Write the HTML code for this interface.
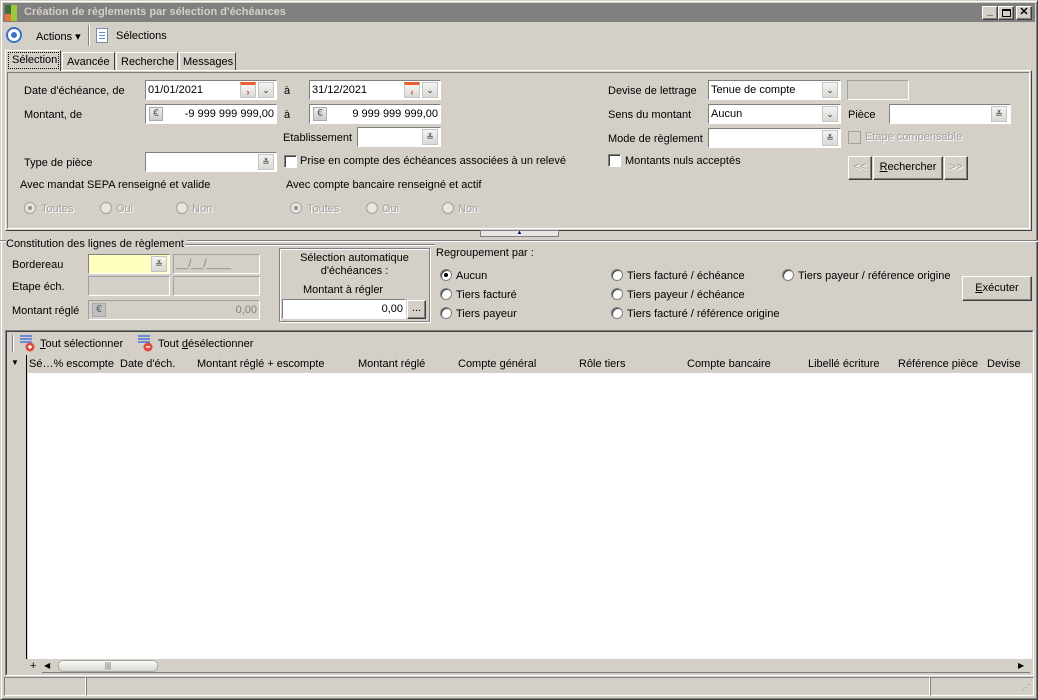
<!DOCTYPE html>
<html><head><meta charset="utf-8">
<style>
*{box-sizing:border-box;margin:0;padding:0}
body{width:1038px;height:700px;background:#d4d0c8;font-family:"Liberation Sans",sans-serif;font-size:11px;color:#000;position:relative;overflow:hidden}
.a{position:absolute;white-space:nowrap}
.in{position:absolute;background:#fff;border-top:1px solid #808080;border-left:1px solid #808080;border-bottom:1px solid #fff;border-right:1px solid #fff;height:20px;padding:1px 2px;line-height:16px}
.dis{background:#d4d0c8;border-top:1px solid #a0a0a0;border-left:1px solid #a0a0a0;border-bottom:1px solid #fff;border-right:1px solid #fff}
.btn{position:absolute;width:16px;height:16px;background:linear-gradient(#f4f4f2,#d8d8d4);border:1px solid #c4c4c0;font-size:9px;line-height:14px;text-align:center;color:#333}
.rb{position:absolute;width:12px;height:12px;border-radius:50%;background:#fff;border:1px solid #808080;box-shadow:inset 1px 1px 0 #404040}
.rb.d{background:#e8e6e0;box-shadow:none;border-color:#a0a0a0}
.rb.on:after{content:"";position:absolute;left:3px;top:3px;width:4px;height:4px;border-radius:50%;background:#000}
.rb.d.on:after{background:#909090}
.cb{position:absolute;width:13px;height:13px;background:#fff;border-top:1px solid #808080;border-left:1px solid #808080;border-bottom:1px solid #fff;border-right:1px solid #fff;box-shadow:inset 1px 1px 0 #404040}
.g{color:#a0a0a0;text-shadow:1px 1px 0 #fff}
.pb{position:absolute;background:#d4d0c8;border-top:1px solid #fff;border-left:1px solid #fff;border-right:1px solid #404040;border-bottom:1px solid #404040;box-shadow:inset -1px -1px 0 #808080;text-align:center}
.eu{position:absolute;width:14px;height:14px;background:linear-gradient(#eee,#ccc);border:1px solid #aaa;font-size:10px;line-height:12px;text-align:center;color:#555}
</style></head><body>
<div class="a" style="left:0;top:0;width:1038px;height:700px;border-top:1px solid #d4d0c8;border-left:1px solid #d4d0c8;border-right:1px solid #404040;border-bottom:1px solid #404040;box-shadow:inset 1px 1px 0 #fff,inset -1px -1px 0 #808080"></div>
<div class="a" style="left:3px;top:3px;width:1032px;height:19px;background:#808080"></div>
<div class="a" style="left:5px;top:5px;width:6px;height:16px;background:#3c6e3c"></div>
<div class="a" style="left:5px;top:14px;width:6px;height:7px;background:#e8743c"></div>
<div class="a" style="left:11px;top:5px;width:6px;height:16px;background:#9cc93c"></div>
<div class="a" style="left:24px;top:6px;color:#d4d0c8;font-weight:bold;font-size:11px">Création de règlements par sélection d'échéances</div>
<div class="pb" style="left:982px;top:6px;width:16px;height:14px;font-size:10px;line-height:10px;font-weight:bold">_</div>
<div class="pb" style="left:998px;top:6px;width:16px;height:14px"><div style="margin:2px auto;width:9px;height:8px;border:1px solid #000;border-top-width:2px"></div></div>
<div class="pb" style="left:1016px;top:6px;width:16px;height:14px;font-size:11px;line-height:11px;font-weight:bold">✕</div>
<div class="a" style="left:6px;top:27px;width:16px;height:16px;border-radius:50%;border:2px solid #3a72c8;background:#fff"><div style="margin:3px;width:6px;height:6px;border-radius:50%;background:#3a72c8"></div></div>
<div class="a" style="left:36px;top:30px">Actions ▾</div>
<div class="a" style="left:88px;top:25px;width:2px;height:21px;border-left:1px solid #808080;border-right:1px solid #fff"></div>
<div class="a" style="left:96px;top:28px;width:12px;height:15px;background:#fff;border:1px solid #7a8aa8"><div style="margin:3px 2px;height:1px;background:#6a8ad8;box-shadow:0 3px 0 #6a8ad8,0 6px 0 #6a8ad8"></div></div>
<div class="a" style="left:116px;top:30px">Sélections</div>
<div class="a" style="left:5px;top:50px;width:56px;height:21px;background:#d4d0c8;border-top:1px solid #fff;border-left:1px solid #fff;border-right:1px solid #404040;z-index:2"></div>
<div class="a" style="left:8px;top:52px;width:51px;height:17px;border:1px dotted #000;z-index:3;padding-left:3px;line-height:14px">Sélection</div>
<div class="a" style="left:62px;top:52px;width:53px;height:18px;border-top:1px solid #fff;border-left:1px solid #fff;border-right:1px solid #404040;padding:3px 0 0 4px">Avancée</div>
<div class="a" style="left:116px;top:52px;width:62px;height:18px;border-top:1px solid #fff;border-left:1px solid #fff;border-right:1px solid #404040;padding:3px 0 0 4px">Recherche</div>
<div class="a" style="left:179px;top:52px;width:57px;height:18px;border-top:1px solid #fff;border-left:1px solid #fff;border-right:1px solid #404040;padding:3px 0 0 3px">Messages</div>
<div class="a" style="left:5px;top:70px;width:1027px;height:161px;border-top:1px solid #fff;border-left:1px solid #fff;border-right:1px solid #404040;border-bottom:1px solid #404040"></div>
<div class="a" style="left:7px;top:72px;width:1023px;height:157px;border-top:1px solid #808080;border-left:1px solid #808080;border-right:1px solid #fff;border-bottom:1px solid #fff"></div>

<div class="a" style="left:24px;top:85px">Date d'échéance, de</div>
<div class="in" style="left:145px;top:80px;width:132px">01/01/2021</div>
<div class="btn" style="left:240px;top:82px;color:#d04020;font-weight:bold;border-top:3px solid #e86030">›</div>
<div class="btn" style="left:258px;top:82px">⌄</div>
<div class="a" style="left:284px;top:85px">à</div>
<div class="in" style="left:309px;top:80px;width:132px">31/12/2021</div>
<div class="btn" style="left:404px;top:82px;color:#d04020;font-weight:bold;border-top:3px solid #e86030">‹</div>
<div class="btn" style="left:422px;top:82px">⌄</div>

<div class="a" style="left:24px;top:109px">Montant, de</div>
<div class="in" style="left:145px;top:104px;width:132px;text-align:right">-9 999 999 999,00</div>
<div class="eu" style="left:149px;top:107px">€</div>
<div class="a" style="left:284px;top:109px">à</div>
<div class="in" style="left:309px;top:104px;width:132px;text-align:right">9 999 999 999,00</div>
<div class="eu" style="left:313px;top:107px">€</div>

<div class="a" style="left:283px;top:132px">Etablissement</div>
<div class="in" style="left:357px;top:127px;width:84px"></div>
<div class="btn" style="left:422px;top:129px">≚</div>

<div class="a" style="left:24px;top:157px">Type de pièce</div>
<div class="in" style="left:145px;top:152px;width:132px"></div>
<div class="btn" style="left:258px;top:154px">≚</div>
<div class="cb" style="left:284px;top:155px"></div>
<div class="a" style="left:300px;top:155px">Prise en compte des échéances associées à un relevé</div>

<div class="a" style="left:20px;top:179px">Avec mandat SEPA renseigné et valide</div>
<div class="a" style="left:286px;top:179px">Avec compte bancaire renseigné et actif</div>
<div class="rb d on" style="left:24px;top:202px"></div><div class="a g" style="left:41px;top:203px">Toutes</div>
<div class="rb d" style="left:100px;top:202px"></div><div class="a g" style="left:116px;top:203px">Oui</div>
<div class="rb d" style="left:176px;top:202px"></div><div class="a g" style="left:192px;top:203px">Non</div>
<div class="rb d on" style="left:290px;top:202px"></div><div class="a g" style="left:307px;top:203px">Toutes</div>
<div class="rb d" style="left:366px;top:202px"></div><div class="a g" style="left:382px;top:203px">Oui</div>
<div class="rb d" style="left:442px;top:202px"></div><div class="a g" style="left:458px;top:203px">Non</div>

<div class="a" style="left:608px;top:85px">Devise de lettrage</div>
<div class="in" style="left:708px;top:80px;width:133px">Tenue de compte</div>
<div class="btn" style="left:822px;top:82px">⌄</div>
<div class="in dis" style="left:847px;top:80px;width:62px"></div>
<div class="a" style="left:608px;top:109px">Sens du montant</div>
<div class="in" style="left:708px;top:104px;width:133px">Aucun</div>
<div class="btn" style="left:822px;top:106px">⌄</div>
<div class="a" style="left:848px;top:109px">Pièce</div>
<div class="in" style="left:889px;top:104px;width:122px"></div>
<div class="btn" style="left:991px;top:106px">≚</div>
<div class="a" style="left:608px;top:133px">Mode de règlement</div>
<div class="in" style="left:708px;top:128px;width:133px"></div>
<div class="btn" style="left:822px;top:130px">≚</div>
<div class="cb" style="left:848px;top:131px;background:#d4d0c8;box-shadow:none;border-color:#a0a0a0"></div>
<div class="a g" style="left:865px;top:131px">Etape compensable</div>
<div class="cb" style="left:608px;top:154px"></div>
<div class="a" style="left:625px;top:155px">Montants nuls acceptés</div>
<div class="pb g" style="left:848px;top:156px;width:24px;height:24px;line-height:21px">&lt;&lt;</div>
<div class="pb" style="left:873px;top:156px;width:70px;height:24px;line-height:21px"><u>R</u>echercher</div>
<div class="pb g" style="left:944px;top:156px;width:24px;height:24px;line-height:21px">&gt;&gt;</div>

<div class="a" style="left:480px;top:230px;width:79px;height:7px;border:1px solid #808080;background:#e8e6e0;font-size:6px;line-height:5px;text-align:center;color:#000080">▲</div>
<div class="a" style="left:0;top:240px;width:1038px;height:2px;border-top:1px solid #808080;border-bottom:1px solid #fff"></div>

<div class="a" style="left:6px;top:238px;background:#d4d0c8;padding-right:3px">Constitution des lignes de règlement</div>
<div class="a" style="left:185px;top:244px;width:250px;height:2px;border-top:1px solid #808080;border-bottom:1px solid #fff"></div>
<div class="a" style="left:12px;top:259px">Bordereau</div>
<div class="in" style="left:88px;top:254px;width:82px;background:#ffffc0"></div>
<div class="btn" style="left:151px;top:256px">≚</div>
<div class="in dis" style="left:173px;top:254px;width:87px;color:#808080">__/__/____</div>
<div class="a" style="left:12px;top:281px">Etape éch.</div>
<div class="in dis" style="left:88px;top:276px;width:82px"></div>
<div class="in dis" style="left:173px;top:276px;width:87px"></div>
<div class="a" style="left:12px;top:305px">Montant réglé</div>
<div class="in dis" style="left:88px;top:300px;width:172px;text-align:right;color:#808080">0,00</div>
<div class="eu" style="left:92px;top:303px;background:#c0c0c0">€</div>

<div class="a" style="left:279px;top:248px;width:151px;height:74px;border:1px solid #808080;box-shadow:1px 1px 0 #fff,inset 1px 1px 0 #fff"></div>
<div class="a" style="left:279px;top:252px;width:151px;text-align:center;line-height:13px;white-space:normal">Sélection automatique<br>d'échéances :</div>
<div class="a" style="left:303px;top:284px">Montant à régler</div>
<div class="in" style="left:282px;top:299px;width:124px;text-align:right">0,00</div>
<div class="pb" style="left:407px;top:300px;width:19px;height:19px;line-height:14px">...</div>

<div class="a" style="left:436px;top:247px">Regroupement par :</div>
<div class="rb on" style="left:440px;top:269px"></div><div class="a" style="left:456px;top:270px">Aucun</div>
<div class="rb" style="left:440px;top:288px"></div><div class="a" style="left:456px;top:289px">Tiers facturé</div>
<div class="rb" style="left:440px;top:307px"></div><div class="a" style="left:456px;top:308px">Tiers payeur</div>
<div class="rb" style="left:611px;top:269px"></div><div class="a" style="left:627px;top:270px">Tiers facturé / échéance</div>
<div class="rb" style="left:611px;top:288px"></div><div class="a" style="left:627px;top:289px">Tiers payeur / échéance</div>
<div class="rb" style="left:611px;top:307px"></div><div class="a" style="left:627px;top:308px">Tiers facturé / référence origine</div>
<div class="rb" style="left:782px;top:269px"></div><div class="a" style="left:798px;top:270px">Tiers payeur / référence origine</div>
<div class="pb" style="left:962px;top:276px;width:70px;height:25px;line-height:22px"><u>E</u>xécuter</div>

<div class="a" style="left:5px;top:330px;width:1029px;height:346px;border-top:1px solid #808080;border-left:1px solid #808080;border-right:1px solid #fff;border-bottom:1px solid #fff"></div>
<div class="a" style="left:6px;top:331px;width:1027px;height:344px;border-top:1px solid #404040;border-left:1px solid #404040;border-right:1px solid #d4d0c8;border-bottom:1px solid #d4d0c8"></div>
<div class="a" style="left:12px;top:335px;width:2px;height:17px;border-left:1px solid #808080;border-right:1px solid #fff"></div>
<svg class="a" style="left:20px;top:334px" width="16" height="18"><rect x="0" y="1" width="12" height="2" fill="#6a8ad8"/><rect x="0" y="4" width="12" height="2" fill="#6a8ad8"/><rect x="0" y="7" width="12" height="2" fill="#6a8ad8"/><circle cx="10" cy="13" r="4.5" fill="#e04a3a"/><path d="M8 13h4M10 11v4" stroke="#fff" stroke-width="1.5"/></svg>
<div class="a" style="left:40px;top:338px"><u>T</u>out sélectionner</div>
<svg class="a" style="left:138px;top:334px" width="16" height="18"><rect x="0" y="1" width="12" height="2" fill="#6a8ad8"/><rect x="0" y="4" width="12" height="2" fill="#6a8ad8"/><rect x="0" y="7" width="12" height="2" fill="#6a8ad8"/><circle cx="10" cy="13" r="4.5" fill="#e04a3a"/><path d="M8 13h4" stroke="#fff" stroke-width="1.5"/></svg>
<div class="a" style="left:158px;top:338px">Tout <u>d</u>ésélectionner</div>
<div class="a" style="left:7px;top:355px;width:1024px;height:18px;background:#d4d0c8"></div>
<div class="a" style="left:28px;top:373px;width:1004px;height:286px;background:#fff"></div>
<div class="a" style="left:26px;top:355px;width:1px;height:304px;background:#000"></div>
<div class="a" style="left:11px;top:358px;font-size:8px">▼</div>
<div class="a" style="left:29px;top:358px">Sé…% escompte</div>
<div class="a" style="left:120px;top:358px">Date d'éch.</div>
<div class="a" style="left:197px;top:358px">Montant réglé + escompte</div>
<div class="a" style="left:358px;top:358px">Montant réglé</div>
<div class="a" style="left:458px;top:358px">Compte général</div>
<div class="a" style="left:579px;top:358px">Rôle tiers</div>
<div class="a" style="left:687px;top:358px">Compte bancaire</div>
<div class="a" style="left:808px;top:358px">Libellé écriture</div>
<div class="a" style="left:898px;top:358px">Référence pièce</div>
<div class="a" style="left:987px;top:358px">Devise</div>
<div class="a" style="left:30px;top:661px;font-size:11px;line-height:10px">+</div>
<div class="a" style="left:42px;top:659px;width:988px;height:14px;background:#d4d0c8;border-bottom:1px solid #808080"></div>
<div class="a" style="left:44px;top:660px;font-size:8px;line-height:12px">◀</div>
<div class="a" style="left:58px;top:660px;width:100px;height:12px;border-radius:5px;border:1px solid #a8a8a4;background:linear-gradient(#fafaf8,#d8d8d4);text-align:center;font-size:8px;line-height:10px;color:#555">|||</div>
<div class="a" style="left:1018px;top:660px;font-size:8px;line-height:12px">▶</div>
<div class="a" style="left:4px;top:677px;width:82px;height:19px;border-top:1px solid #808080;border-left:1px solid #808080;border-right:1px solid #fff;border-bottom:1px solid #fff"></div>
<div class="a" style="left:86px;top:677px;width:844px;height:19px;border-top:1px solid #808080;border-left:1px solid #808080;border-right:1px solid #fff;border-bottom:1px solid #fff"></div>
<div class="a" style="left:930px;top:677px;width:104px;height:19px;border-top:1px solid #808080;border-left:1px solid #808080;border-right:1px solid #fff;border-bottom:1px solid #fff"></div>
<div class="a" style="left:1022px;top:684px;font-size:8px;color:#808080;line-height:8px">⋰</div>
</body></html>
